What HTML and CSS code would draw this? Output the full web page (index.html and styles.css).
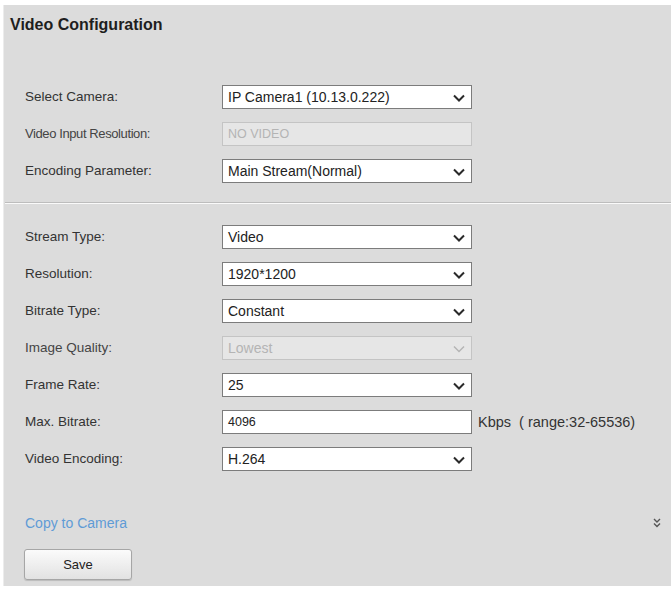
FILE: index.html
```html
<!DOCTYPE html>
<html lang="en">
<head>
    <meta charset="UTF-8">
    <title>Video Configuration</title>
    <link rel="stylesheet" href="styles.css">
</head>
<body>
    <div class="panel">
        <h2 class="title">Video Configuration</h2>

        <div class="section first">
            <div class="row">
                <label>Select Camera:</label>
                <div class="field">IP Camera1 (10.13.0.222)
                    <svg class="arrow" viewBox="0 0 12 8"><polyline points="1,1.5 6,6.5 11,1.5"/></svg>
                </div>
            </div>
            <div class="row">
                <label class="dim tight">Video Input Resolution:</label>
                <div class="field disabled plain">NO VIDEO</div>
            </div>
            <div class="row">
                <label>Encoding Parameter:</label>
                <div class="field">Main Stream(Normal)
                    <svg class="arrow" viewBox="0 0 12 8"><polyline points="1,1.5 6,6.5 11,1.5"/></svg>
                </div>
            </div>
        </div>

        <div class="divider"></div>

        <div class="section">
            <div class="row">
                <label>Stream Type:</label>
                <div class="field">Video
                    <svg class="arrow" viewBox="0 0 12 8"><polyline points="1,1.5 6,6.5 11,1.5"/></svg>
                </div>
            </div>
            <div class="row">
                <label>Resolution:</label>
                <div class="field">1920*1200
                    <svg class="arrow" viewBox="0 0 12 8"><polyline points="1,1.5 6,6.5 11,1.5"/></svg>
                </div>
            </div>
            <div class="row">
                <label>Bitrate Type:</label>
                <div class="field">Constant
                    <svg class="arrow" viewBox="0 0 12 8"><polyline points="1,1.5 6,6.5 11,1.5"/></svg>
                </div>
            </div>
            <div class="row">
                <label class="dim">Image Quality:</label>
                <div class="field disabled">Lowest
                    <svg class="arrow" viewBox="0 0 12 8"><polyline points="1,1.5 6,6.5 11,1.5"/></svg>
                </div>
            </div>
            <div class="row">
                <label>Frame Rate:</label>
                <div class="field">25
                    <svg class="arrow" viewBox="0 0 12 8"><polyline points="1,1.5 6,6.5 11,1.5"/></svg>
                </div>
            </div>
            <div class="row">
                <label>Max. Bitrate:</label>
                <div class="field plain">4096</div>
                <span class="unit">Kbps&nbsp; ( range:32-65536)</span>
            </div>
            <div class="row">
                <label>Video Encoding:</label>
                <div class="field">H.264
                    <svg class="arrow" viewBox="0 0 12 8"><polyline points="1,1.5 6,6.5 11,1.5"/></svg>
                </div>
            </div>
        </div>

        <div class="copy-row">
            <a href="#" class="copy">Copy to Camera</a>
            <svg class="more" viewBox="0 0 8 10"><polyline points="1,1 4,4 7,1"/><polyline points="1,5.5 4,8.5 7,5.5"/></svg>
        </div>

        <div class="actions">
            <button class="btn">Save</button>
        </div>
    </div>
</body>
</html>
```

FILE: styles.css
```css
body {
    margin: 0;
    background: #fff;
    font-family: 'Liberation Sans', Arial, sans-serif;
    color: #333;
}

.panel {
    margin: 5px 0 0 3px;
    height: 581px;
    box-sizing: border-box;
    background: #dcdcdc;
    border-left: 1px solid #ececec;
}

.title {
    margin: 0;
    padding: 11px 0 0 6px;
    font-size: 16px;
    line-height: 18px;
    font-weight: bold;
    color: #1e1e1e;
}

.section.first {
    margin-top: 44px;
}

.section {
    padding-left: 21px;
}

.row {
    display: flex;
    align-items: center;
    height: 37px;
}

.row label {
    width: 197px;
    font-size: 13.5px;
    color: #333;
}

.row label.dim {
    color: #444;
}

.row label.tight {
    font-size: 13px;
    letter-spacing: -0.4px;
}

.field {
    position: relative;
    width: 250px;
    height: 24px;
    box-sizing: border-box;
    border: 1px solid #7c7c7c;
    background: #fff;
    font-size: 14px;
    line-height: 22px;
    padding-left: 5px;
    color: #222;
}

.field.plain {
    font-size: 12.5px;
}

.field.disabled {
    background: #e6e6e6;
    border-color: #c4c4c4;
    color: #b4b4b4;
}

.arrow {
    position: absolute;
    right: 6px;
    top: 8px;
    width: 12px;
    height: 8px;
    fill: none;
    stroke: #2a2a2a;
    stroke-width: 2;
}

.field.disabled .arrow {
    stroke: #b4b4b4;
    stroke-width: 1.5;
}

.unit {
    margin-left: 6px;
    font-size: 14.5px;
    color: #333;
}

.divider {
    margin: 13px 0 14px 1px;
    height: 1px;
    background: #bdbdbd;
    border-bottom: 1px solid #fafafa;
}

.copy-row {
    display: flex;
    align-items: center;
    justify-content: space-between;
    height: 20px;
    margin-top: 36px;
    padding: 0 10px 0 21px;
}

.copy {
    font-size: 14px;
    color: #5f9bd6;
    text-decoration: none;
}

.more {
    width: 8px;
    height: 10px;
    fill: none;
    stroke: #555;
    stroke-width: 1.4;
}

.actions {
    margin-top: 16px;
    padding-left: 20px;
}

.btn {
    width: 108px;
    height: 31px;
    border: 1px solid #a6a6a6;
    border-radius: 3px;
    background: linear-gradient(#fbfbfb, #e2e2e2);
    box-shadow: 0 1px 1px rgba(0, 0, 0, 0.15);
    font-family: 'Liberation Sans', Arial, sans-serif;
    font-size: 13px;
    color: #222;
}
```
